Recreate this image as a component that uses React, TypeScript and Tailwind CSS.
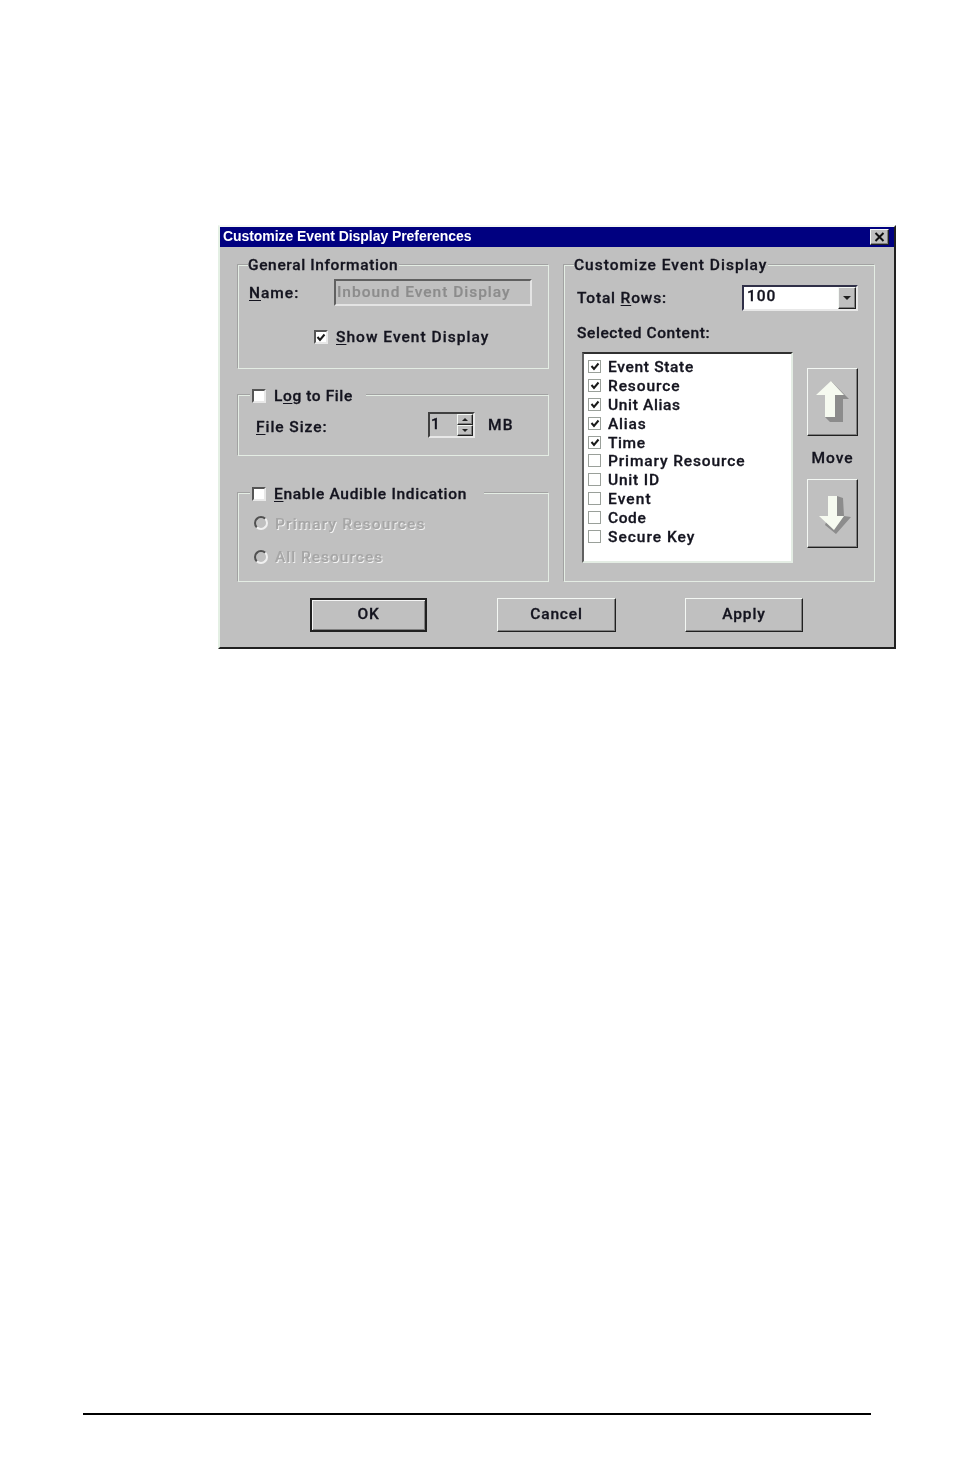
import React from "react";

const font = "font-['Roboto','Liberation_Sans',sans-serif] font-medium text-[15.5px] tracking-[0.85px] text-[#14141f] [-webkit-text-stroke:0.3px_#14141f]";
const etched = "border border-[#e4ede4] shadow-[-1px_-1px_0_#a2a2a2]";
const raised = "border border-t-[#f4f8f4] border-l-[#f4f8f4] border-r-[#202020] border-b-[#202020] shadow-[inset_-1px_-1px_0_#808080]";
const disabledText = "text-[#a6a6a6] [-webkit-text-stroke:0.2px_#a6a6a6] [text-shadow:1px_1px_0_#f4f4f4]";

function U({ children }: { children: React.ReactNode }) {
  return <span className="underline underline-offset-2">{children}</span>;
}

function Check({ checked, flat }: { checked?: boolean; flat?: boolean }) {
  return (
    <span
      className={
        "flex shrink-0 items-center justify-center bg-white " +
        (flat
          ? "h-[13px] w-[13px] border border-[#9aa09a]"
          : "h-[14px] w-[14px] border-2 border-t-[#555] border-l-[#555] border-r-[#e8e8e8] border-b-[#e8e8e8]")
      }
    >
      {checked && (
        <svg width="10" height="9" viewBox="0 0 10 9">
          <path d="M1.5 4 L4 7 L8.5 1.5" fill="none" stroke="#1a1a1a" strokeWidth="2" />
        </svg>
      )}
    </span>
  );
}

function Radio() {
  return (
    <span className="block h-[14px] w-[14px] shrink-0 rounded-full border-2 border-t-[#505050] border-l-[#505050] border-r-[#f0f0f0] border-b-[#f0f0f0] bg-[#c0c0c0]" />
  );
}

function PushButton({ label, width, isDefault }: { label: string; width: string; isDefault?: boolean }) {
  return (
    <button
      className={
        "flex h-[34px] items-center justify-center bg-[#c0c0c0] " +
        width +
        " " +
        (isDefault
          ? "border-2 border-[#202020] shadow-[inset_1px_1px_0_#f4f4f4,inset_-1px_-1px_0_#808080]"
          : raised)
      }
    >
      {label}
    </button>
  );
}

const listItems: [string, boolean, string][] = [
  ["Event State", true, "tracking-[0.68px]"],
  ["Resource", true, "tracking-[0.9px]"],
  ["Unit Alias", true, "tracking-[0.65px]"],
  ["Alias", true, "tracking-[0.8px]"],
  ["Time", true, "tracking-[0.6px]"],
  ["Primary Resource", false, "tracking-[0.87px]"],
  ["Unit ID", false, "tracking-[0.8px]"],
  ["Event", false, "tracking-[1.1px]"],
  ["Code", false, "tracking-[0.6px]"],
  ["Secure Key", false, "tracking-[1px]"],
];

export default function App() {
  return (
    <div className="h-[1474px] w-[954px] overflow-hidden bg-white pt-[225px]">
      <div
        className={
          "ml-[218px] h-[424px] w-[678px] border-2 border-t-[#f4f8f4] border-l-[#e4f0e4] border-r-[#202020] border-b-[#202020] bg-[#c0c0c0] blur-[0.55px] " +
          font
        }
      >
        {/* title bar */}
        <div className="flex h-[20px] items-center justify-between bg-[#000080] pl-[3px] pr-[5px]">
          <span className="mb-[1px] font-['Liberation_Sans',sans-serif] text-[14px] font-bold tracking-[-0.06px] text-white [-webkit-text-stroke:0]">
            Customize Event Display Preferences
          </span>
          <span className={"flex h-[16px] w-[19px] items-center justify-center bg-[#c0c0c0] " + raised}>
            <svg width="11" height="10" viewBox="0 0 11 10">
              <path d="M1.5 1 L9.5 9 M9.5 1 L1.5 9" stroke="#101010" strokeWidth="2" fill="none" />
            </svg>
          </span>
        </div>

        <div className="ml-[18px] mt-[18px] flex gap-[15px]">
          {/* left column */}
          <div className="flex w-[311px] flex-col">
            <div className={"h-[104px] " + etched}>
              <div className="-mt-[10px] ml-[9px] h-[20px] w-fit bg-[#c0c0c0] pr-[1px] leading-[18px] tracking-[0.63px]">
                General Information
              </div>
              <div className="mt-[3px] flex h-[27px] items-center pl-[10px]">
                <span className="w-[85px] pt-[3px] tracking-[1px]">
                  <U>N</U>ame:
                </span>
                <div className="flex h-[27px] w-[198px] items-center border-2 border-t-[#606060] border-l-[#606060] border-r-[#e4e4e4] border-b-[#e4e4e4] pl-[1px] tracking-[0.98px] text-[#8c8c8c] [-webkit-text-stroke:0.2px_#8c8c8c]">
                  Inbound Event Display
                </div>
              </div>
              <div className="mt-[24px] flex h-[14px] items-center gap-[8px] pl-[75px]">
                <Check checked />
                <span className="pt-[2px] tracking-[1.03px]">
                  <U>S</U>how Event Display
                </span>
              </div>
            </div>

            <div className={"mt-[26px] h-[61px] " + etched}>
              <div className="-mt-[10px] ml-[11px] flex h-[20px] w-[116px] items-center gap-[8px] bg-[#c0c0c0] pl-[2px]">
                <Check />
                <span className="pt-[2px] tracking-[0.6px]">
                  L<U>o</U>g to File
                </span>
              </div>
              <div className="mt-[6px] flex h-[25px] items-center pl-[17px]">
                <span className="w-[172px] pt-[7px] tracking-[0.95px]">
                  <U>F</U>ile Size:
                </span>
                <div className="flex h-[26px] w-[47px] items-stretch border-2 border-t-[#404040] border-l-[#404040] border-r-[#e8e8e8] border-b-[#e8e8e8]">
                  <span className="w-[27px] pl-[1px] leading-[20px]">1</span>
                  <span className="flex flex-1 flex-col">
                    <span className={"flex flex-1 items-center justify-center " + raised}>
                      <span className="h-0 w-0 border-x-[3px] border-b-[3px] border-x-transparent border-b-[#202020]" />
                    </span>
                    <span className={"flex flex-1 items-center justify-center " + raised}>
                      <span className="h-0 w-0 border-x-[3px] border-t-[3px] border-x-transparent border-t-[#202020]" />
                    </span>
                  </span>
                </div>
                <span className="ml-[13px] pt-[3px] tracking-[1.2px]">MB</span>
              </div>
            </div>

            <div className={"mt-[37px] h-[89px] " + etched}>
              <div className="-mt-[10px] ml-[11px] flex h-[20px] w-[234px] items-center gap-[8px] bg-[#c0c0c0] pl-[2px]">
                <Check />
                <span className="pt-[2px] tracking-[0.7px]">
                  <U>E</U>nable Audible Indication
                </span>
              </div>
              <div className={"mt-[12px] flex h-[14px] items-center gap-[7px] pl-[15px] " + disabledText}>
                <Radio />
                <span className="pt-[3px] tracking-[1.13px]">Primary Resources</span>
              </div>
              <div className={"mt-[20px] flex h-[14px] items-center gap-[7px] pl-[15px] " + disabledText}>
                <Radio />
                <span className="pt-[2px] tracking-[1px]">All Resources</span>
              </div>
            </div>
          </div>

          {/* right column */}
          <div className={"h-[317px] w-[311px] " + etched}>
            <div className="-mt-[10px] ml-[9px] h-[20px] w-fit bg-[#c0c0c0] pr-[1px] leading-[18px] tracking-[1px]">
              Customize Event Display
            </div>
            <div className="mt-[9px] flex h-[26px] items-center pl-[12px]">
              <span className="w-[165px] pt-[2px] tracking-[0.85px]">
                Total <U>R</U>ows:
              </span>
              <div className="flex h-[26px] w-[116px] items-center justify-between border-2 border-t-[#303048] border-l-[#303048] border-r-[#e8e8e8] border-b-[#e8e8e8] bg-white pl-[3px]">
                <span className="pb-[3px] tracking-[1px]">100</span>
                <span className={"flex h-[22px] w-[18px] items-center justify-center bg-[#c0c0c0] " + raised}>
                  <span className="h-0 w-0 border-x-[4px] border-t-[4px] border-x-transparent border-t-[#202020]" />
                </span>
              </div>
            </div>
            <div className="ml-[12px] mt-[13px] h-[18px] leading-[18px] tracking-[0.6px]">Selected Content:</div>
            <div className="ml-[17px] mt-[10px] flex">
              <div className="h-[211px] w-[211px] border-2 border-t-[#303030] border-l-[#606060] border-r-[#e4ede4] border-b-[#e4ede4] bg-white pl-[4px] pt-[3.6px]">
                {listItems.map(([label, checked, track]) => (
                  <div key={label} className="flex h-[18.8px] items-center gap-[7px]">
                    <Check flat checked={checked} />
                    <span className={"pt-[2px] " + track}>{label}</span>
                  </div>
                ))}
              </div>
              <div className="ml-[14px] flex w-[51px] flex-col items-center pt-[16px]">
                <div className={"flex h-[68px] w-[51px] items-center justify-center bg-[#c0c0c0] " + raised}>
                  <svg width="36" height="44" viewBox="0 0 36 44">
                    <path d="M16 1 L34 19 L28 19 L28 42 L15 42 L10 37 L20 15 Z" fill="#8c8c8c" />
                    <path d="M16 1 L1 15 L10 15 L10 37 L20 37 L20 15 L29 15 Z" fill="#f6faf0" />
                  </svg>
                </div>
                <div className="mt-[13px] h-[18px] leading-[18px] tracking-[1px]">Move</div>
                <div className={"mt-[12px] flex h-[69px] w-[51px] items-center justify-center bg-[#c0c0c0] " + raised}>
                  <svg width="36" height="42" viewBox="0 0 36 42">
                    <path d="M22 3 L28 5 L29 23 L36 24 L21 41 L10 32 Z" fill="#8c8c8c" />
                    <path d="M13 3 L22 3 L22 23 L29 23 L19 37 L4 23 L13 23 Z" fill="#f6faf0" />
                  </svg>
                </div>
              </div>
            </div>
          </div>
        </div>

        {/* buttons */}
        <div className="ml-[90px] mt-[16px] flex">
          <PushButton label="OK" width="w-[117px]" isDefault />
          <div className="ml-[70px]">
            <PushButton label="Cancel" width="w-[119px]" />
          </div>
          <div className="ml-[69px]">
            <PushButton label="Apply" width="w-[118px]" />
          </div>
        </div>
      </div>

      <div className="ml-[83px] mt-[764px] h-[2px] w-[788px] bg-black" />
    </div>
  );
}
